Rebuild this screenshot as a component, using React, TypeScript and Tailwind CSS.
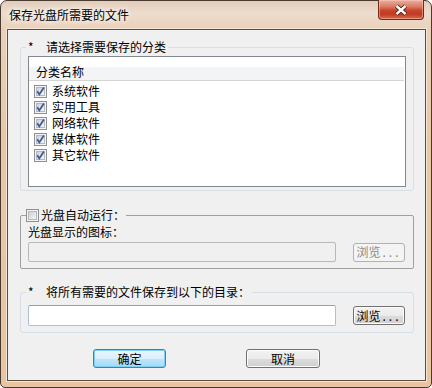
import React from "react";

const font = "font-['Noto_Sans_CJK_SC','Noto_Sans',sans-serif]";

function Check({ checked }: { checked?: boolean }) {
  return (
    <svg width="13" height="13" viewBox="0 0 13 13" className="shrink-0">
      <defs>
        <linearGradient id="cbg" x1="0" y1="0" x2="1" y2="1">
          <stop offset="0" stopColor="#c9cdd3" />
          <stop offset="1" stopColor="#f7f7f7" />
        </linearGradient>
      </defs>
      <rect x="0.5" y="0.5" width="12" height="12" fill="#f4f4f4" stroke="#8f8f8f" />
      <rect x="2.5" y="2.5" width="8" height="8" fill="url(#cbg)" stroke="#b5b9bf" />
      {checked && (
        <path d="M3.2 6.3 L5.3 9.4 L9.9 2.6" fill="none" stroke="#3b59a0" strokeWidth="1.8" />
      )}
    </svg>
  );
}

const btn =
  "h-[19px] rounded-[3px] border border-[#707070] bg-[linear-gradient(#f2f2f2,#ebebeb_50%,#dddddd_50%,#cfcfcf)] shadow-[inset_0_0_0_1px_#fcfcfc] flex items-center justify-center text-black";

function Browse({ disabled }: { disabled?: boolean }) {
  return (
    <div
      className={
        disabled
          ? "ml-[17px] w-[52px] h-[19px] rounded-[3px] border border-[#adb2b5] bg-[#f4f4f4] flex items-center justify-center text-[#8a8a8a]"
          : "ml-[17px] w-[52px] " + btn
      }
    >
      浏览<span className="tracking-[3px] ml-[2px]">...</span>
    </div>
  );
}

const items = ["系统软件", "实用工具", "网络软件", "媒体软件", "其它软件"];

export default function App() {
  return (
    <div className={`w-[432px] h-[388px] ${font} text-[12px] leading-[14px] text-black`}>
      <div className="w-[432px] h-[388px] flex flex-col border border-[#4a3b30] rounded-t-[7px] rounded-b-[5px] bg-[linear-gradient(180deg,#e2cdbb_0px,#eddccd_12px,#ead0b7_29px,#e8c7a7_140px,#e8c4a3_100%)] pl-[6px] pr-[5px] pb-[6px]">
        {/* title bar */}
        <div className="h-[28px] flex items-start">
          <span className="mt-[7px] ml-[2px] [text-shadow:0_0_6px_#fff,0_0_6px_#fff]">
            保存光盘所需要的文件
          </span>
          <div className="ml-auto -mt-px mr-[2px] w-[46px] h-[20px] rounded-b-[4px] border border-[#6e2a1c] border-t-0 bg-[linear-gradient(180deg,#eab0a0_0%,#dc7a63_35%,#c8442a_55%,#c13b21_75%,#d9694f_100%)] shadow-[inset_0_0_0_1px_rgba(255,210,200,0.45)] flex items-center justify-center">
            <svg width="14" height="12" viewBox="0 0 14 12">
              <path d="M2.5 2 L11.5 10 M2.5 10 L11.5 2" stroke="#3b1a12" strokeWidth="4.2" />
              <path d="M2.5 2 L11.5 10 M2.5 10 L11.5 2" stroke="#ffffff" strokeWidth="2.4" />
            </svg>
          </div>
        </div>

        {/* client */}
        <div className="flex-1 border border-[#5b4d42] shadow-[0_0_0_1px_#f4e6d9] bg-[#f0f0f0] pt-[10px] pl-[12px] pr-[11px]">
          <fieldset className="border border-[#d5dfe5] rounded-[3px] pl-[5px] pr-[7px] pb-[3px]">
            <legend className="px-[2px]">
              <span className="inline-block w-[18px]">*</span>请选择需要保存的分类
            </legend>
            <div className="mt-[2px] ml-[2px] h-[131px] border border-[#828790] bg-white">
              <div className="h-[24px] mr-px border-b border-[#d5d5d5] bg-[linear-gradient(#fff_0%,#fff_42%,#f3f4f6_42%,#f3f4f6_100%)] pl-[7px] pb-px flex items-end">
                分类名称
              </div>
              <div className="pt-[2px] pl-[5px] flex flex-col">
                {items.map((t) => (
                  <div key={t} className="h-[16px] flex items-center gap-[5px]">
                    <Check checked />
                    <span>{t}</span>
                  </div>
                ))}
              </div>
            </div>
          </fieldset>

          <fieldset className="mt-[17px] border border-[#a0a0a0] rounded-[2px] pl-[5px] pr-[7px] pb-[6px] pt-[3px]">
            <legend className="flex items-center gap-[2px] pr-[1px]">
              <Check />
              <span>光盘自动运行：</span>
            </legend>
            <div className="ml-[2px]">光盘显示的图标：</div>
            <div className="mt-[3px] ml-[2px] flex items-center">
              <div className="w-[308px] h-[20px] rounded-[2px] border border-[#b8b8b8] bg-[#f0f0f0]" />
              <Browse disabled />
            </div>
          </fieldset>

          <fieldset className="mt-[16px] border border-[#d5dfe5] rounded-[3px] pl-[5px] pr-[7px] pb-[6px] pt-[6px]">
            <legend className="px-[2px]">
              <span className="inline-block w-[18px]">*</span>将所有需要的文件保存到以下的目录：
            </legend>
            <div className="ml-[2px] flex items-center">
              <div className="w-[308px] h-[21px] rounded-[2px] border border-[#a9c2dc] border-t-[#7fa4cb] bg-white" />
              <Browse />
            </div>
          </fieldset>

          <div className="mt-[16px] ml-[73px] flex gap-[80px]">
            <div className="w-[73px] h-[19px] rounded-[3px] border border-[#3c7fb1] bg-[linear-gradient(#eaf6fd,#d9f0fc_50%,#bee6fd_50%,#a7d9f5)] shadow-[inset_0_0_0_1px_#7fd0f7] flex items-center justify-center">
              确定
            </div>
            <div className={"w-[74px] " + btn}>取消</div>
          </div>
        </div>
      </div>
    </div>
  );
}
